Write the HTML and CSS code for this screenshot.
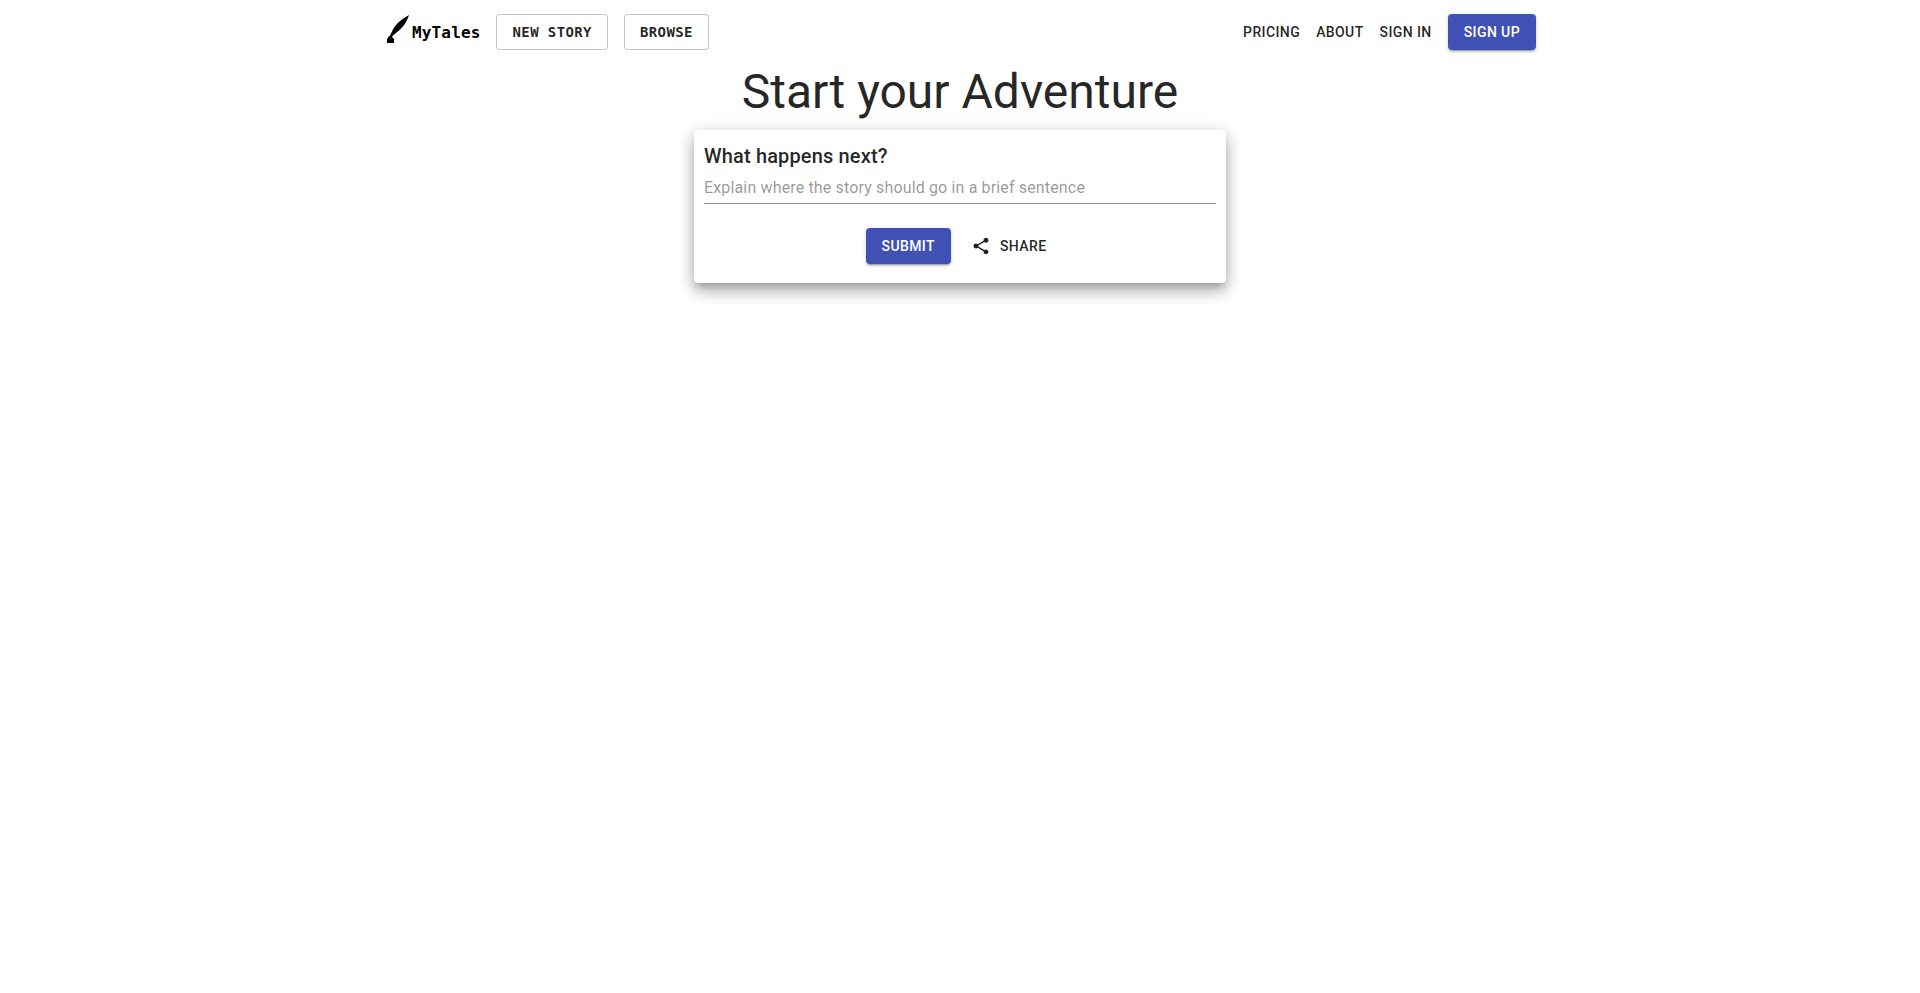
FILE: index.html
```html
<!DOCTYPE html>
<html lang="en">
<head>
    <meta charset="UTF-8">
    <title>MyTales</title>
    <link rel="stylesheet" href="styles.css">
</head>
<body>
    <div class="container">
        <header class="navbar">
            <div class="nav-left">
                <a class="logo" href="#">
                    <svg class="logo-icon" viewBox="0 0 26 28" width="26" height="28">
                        <path d="M25 0 C20 3 15 6 12 10 C9.500 13 8 16.500 6.500 19.500 L5.500 22 L7.500 22.500 C9 20.500 10.500 19 12.500 17.500 C18 13.500 22.500 8 25 0 Z" fill="#000"/>
                        <path d="M5 21 L8 22 L10 24 L10 28 L3 28 L3 24 Z" fill="#000"/>
                    </svg>
                    <span class="logo-text">MyTales</span>
                </a>
                <button class="btn-outline">New Story</button>
                <button class="btn-outline">Browse</button>
            </div>
            <nav class="nav-right">
                <a class="nav-link" href="#">Pricing</a>
                <a class="nav-link" href="#">About</a>
                <a class="nav-link" href="#">Sign in</a>
                <button class="btn-primary">Sign up</button>
            </nav>
        </header>

        <h1 class="title">Start your Adventure</h1>

        <div class="card">
            <h2 class="card-title">What happens next?</h2>
            <input class="prompt" type="text" placeholder="Explain where the story should go in a brief sentence">
            <div class="actions">
                <button class="btn-primary">Submit</button>
                <button class="btn-text">
                    <svg class="share-icon" viewBox="0 0 24 24" width="20" height="20">
                        <path d="M18 16.08c-.76 0-1.44.3-1.96.77L8.91 12.7c.05-.23.09-.46.09-.7s-.04-.47-.09-.7l7.05-4.11c.54.5 1.25.81 2.04.81 1.66 0 3-1.34 3-3s-1.34-3-3-3-3 1.34-3 3c0 .24.04.47.09.7L8.04 9.81C7.5 9.31 6.79 9 6 9c-1.66 0-3 1.34-3 3s1.34 3 3 3c.79 0 1.5-.31 2.04-.81l7.12 4.16c-.05.21-.08.43-.08.65 0 1.61 1.31 2.92 2.92 2.92s2.92-1.31 2.92-2.92-1.31-2.92-2.92-2.92z" fill="rgba(0,0,0,0.87)"/>
                    </svg>
                    Share
                </button>
            </div>
        </div>
    </div>
</body>
</html>
```

FILE: styles.css
```css
* {
    box-sizing: border-box;
}
html, body {
    height: 100%;
}
body {
    margin: 0;
    font-family: Roboto, "Noto Sans", sans-serif;
    background-color: #fff;
    color: rgba(0, 0, 0, 0.87);
}
.container {
    width: 1152px;
    min-height: 100%;
    margin: 0 auto;
    display: flex;
    flex-direction: column;
    align-items: center;
}
.navbar {
    width: 100%;
    height: 64px;
    flex-shrink: 0;
    display: flex;
    align-items: center;
    justify-content: space-between;
}
.nav-left, .nav-right {
    display: flex;
    align-items: center;
}
.logo {
    display: flex;
    align-items: center;
    color: #000;
    text-decoration: none;
    margin-right: 16px;
}
.logo-icon {
    margin-right: 2px;
    margin-bottom: 6px;
}
.logo-text {
    font-family: "DejaVu Sans Mono", monospace;
    font-weight: 700;
    font-size: 16px;
    letter-spacing: 0.15px;
}
button {
    cursor: pointer;
    height: 36px;
    font-size: 14px;
    font-weight: 500;
    text-transform: uppercase;
    letter-spacing: 0.4px;
    border-radius: 4px;
}
.btn-outline {
    font-family: "DejaVu Sans Mono", monospace;
    font-weight: 700;
    padding: 0 15px;
    margin-right: 16px;
    background: #fff;
    border: 1px solid rgba(0, 0, 0, 0.23);
    color: rgba(0, 0, 0, 0.87);
}
.btn-primary {
    font-family: Roboto, sans-serif;
    padding: 0 16px;
    border: none;
    background-color: #3f51b5;
    color: #fff;
    box-shadow: 0 3px 1px -2px rgba(0, 0, 0, 0.2), 0 2px 2px 0 rgba(0, 0, 0, 0.14), 0 1px 5px 0 rgba(0, 0, 0, 0.12);
}
.nav-link {
    font-size: 14px;
    font-weight: 500;
    letter-spacing: 0.4px;
    text-transform: uppercase;
    text-decoration: none;
    color: rgba(0, 0, 0, 0.87);
    margin-right: 16px;
}
.title {
    margin: 0 0 10px;
    font-size: 48px;
    font-weight: 400;
    line-height: 56px;
}
.card {
    width: 532px;
    padding: 10px;
    border-radius: 4px;
    background: #fff;
    box-shadow: 0 5px 6px -3px rgba(0, 0, 0, 0.2), 0 8px 14px 1px rgba(0, 0, 0, 0.14), 0 3px 18px 2px rgba(0, 0, 0, 0.12), 0 10px 18px rgba(0, 0, 0, 0.08);
}
.card-title {
    margin: 0;
    font-size: 20px;
    font-weight: 500;
    line-height: 1.6;
    letter-spacing: 0.15px;
}
.prompt {
    display: block;
    width: 100%;
    height: 32px;
    padding: 6px 0 7px;
    border: none;
    border-bottom: 1px solid rgba(0, 0, 0, 0.42);
    outline: none;
    font-family: Roboto, sans-serif;
    font-size: 16px;
    letter-spacing: 0.15px;
}
.prompt::placeholder {
    color: rgba(0, 0, 0, 0.42);
}
.actions {
    display: flex;
    justify-content: center;
    gap: 8px;
    margin-top: 24px;
    margin-bottom: 9px;
}
.btn-text {
    display: flex;
    align-items: center;
    gap: 9px;
    padding: 0 8px 0 12px;
    border: none;
    background: none;
    color: rgba(0, 0, 0, 0.87);
    font-family: Roboto, sans-serif;
}
```
